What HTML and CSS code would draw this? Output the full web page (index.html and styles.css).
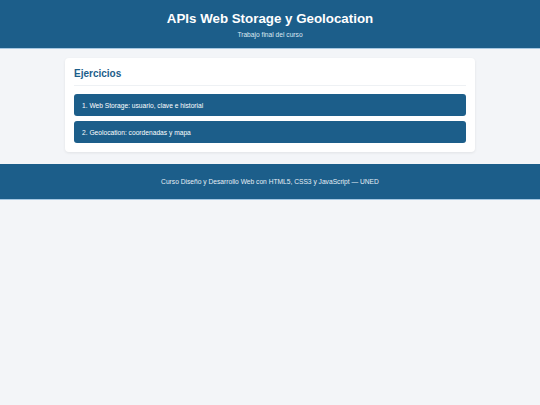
FILE: index.html
```html
<!DOCTYPE html>
<html lang="es">
<head>
<meta charset="utf-8">
<title>APIs Web Storage y Geolocation</title>
<link rel="stylesheet" href="styles.css">
</head>
<body>
<header class="site-header">
  <h1 class="site-title">APIs Web Storage y Geolocation</h1>
  <p class="site-subtitle">Trabajo final del curso</p>
</header>
<main class="main">
  <section class="card">
    <h2 class="card-title">Ejercicios</h2>
    <nav class="exercise-list">
      <a class="exercise" href="#">1. Web Storage: usuario, clave e historial</a>
      <a class="exercise" href="#">2. Geolocation: coordenadas y mapa</a>
    </nav>
  </section>
</main>
<footer class="site-footer">
  <p class="footer-text">Curso Diseño y Desarrollo Web con HTML5, CSS3 y JavaScript — UNED</p>
</footer>
</body>
</html>
```
FILE: styles.css
```css
html, body {
  margin: 0;
  padding: 0;
}
body {
  background: #f3f5f8;
  font-family: "Liberation Sans", Arial, sans-serif;
  color: #222;
}
.site-header {
  background: #1c5e8a;
  color: #fff;
  text-align: center;
  padding: 11px 0 9px;
  border-bottom: 1px solid #a6c8e2;
}
.site-title {
  margin: 0;
  font-size: 13.33px;
  line-height: 16px;
  font-weight: bold;
}
.site-subtitle {
  margin: 4px 0 0;
  font-size: 6.67px;
  line-height: 8px;
  color: #dde9f3;
}
.main {
  padding: 9px 65px 0;
}
.card {
  background: #fff;
  border-radius: 4px;
  box-shadow: 0 1px 3px rgba(0, 0, 0, 0.08);
  padding: 10px 9px 9px;
}
.card-title {
  margin: 0;
  font-size: 10px;
  line-height: 12px;
  font-weight: bold;
  color: #1c5e8a;
  padding-bottom: 5px;
  border-bottom: 1px solid #eef1f4;
}
.exercise-list {
  display: flex;
  flex-direction: column;
  gap: 5px;
  margin-top: 8px;
}
.exercise {
  display: flex;
  align-items: center;
  height: 22px;
  padding: 0 8px;
  background: #1c5e8a;
  color: #fff;
  border-radius: 3px;
  font-size: 6.67px;
  text-decoration: none;
}
.site-footer {
  margin-top: 12px;
  background: #1c5e8a;
  color: #fff;
  height: 35px;
  display: flex;
  align-items: center;
  justify-content: center;
  border-bottom: 1px solid #a6c8e2;
}
.footer-text {
  margin: 0;
  font-size: 6.67px;
  color: #e6eef5;
}
```
